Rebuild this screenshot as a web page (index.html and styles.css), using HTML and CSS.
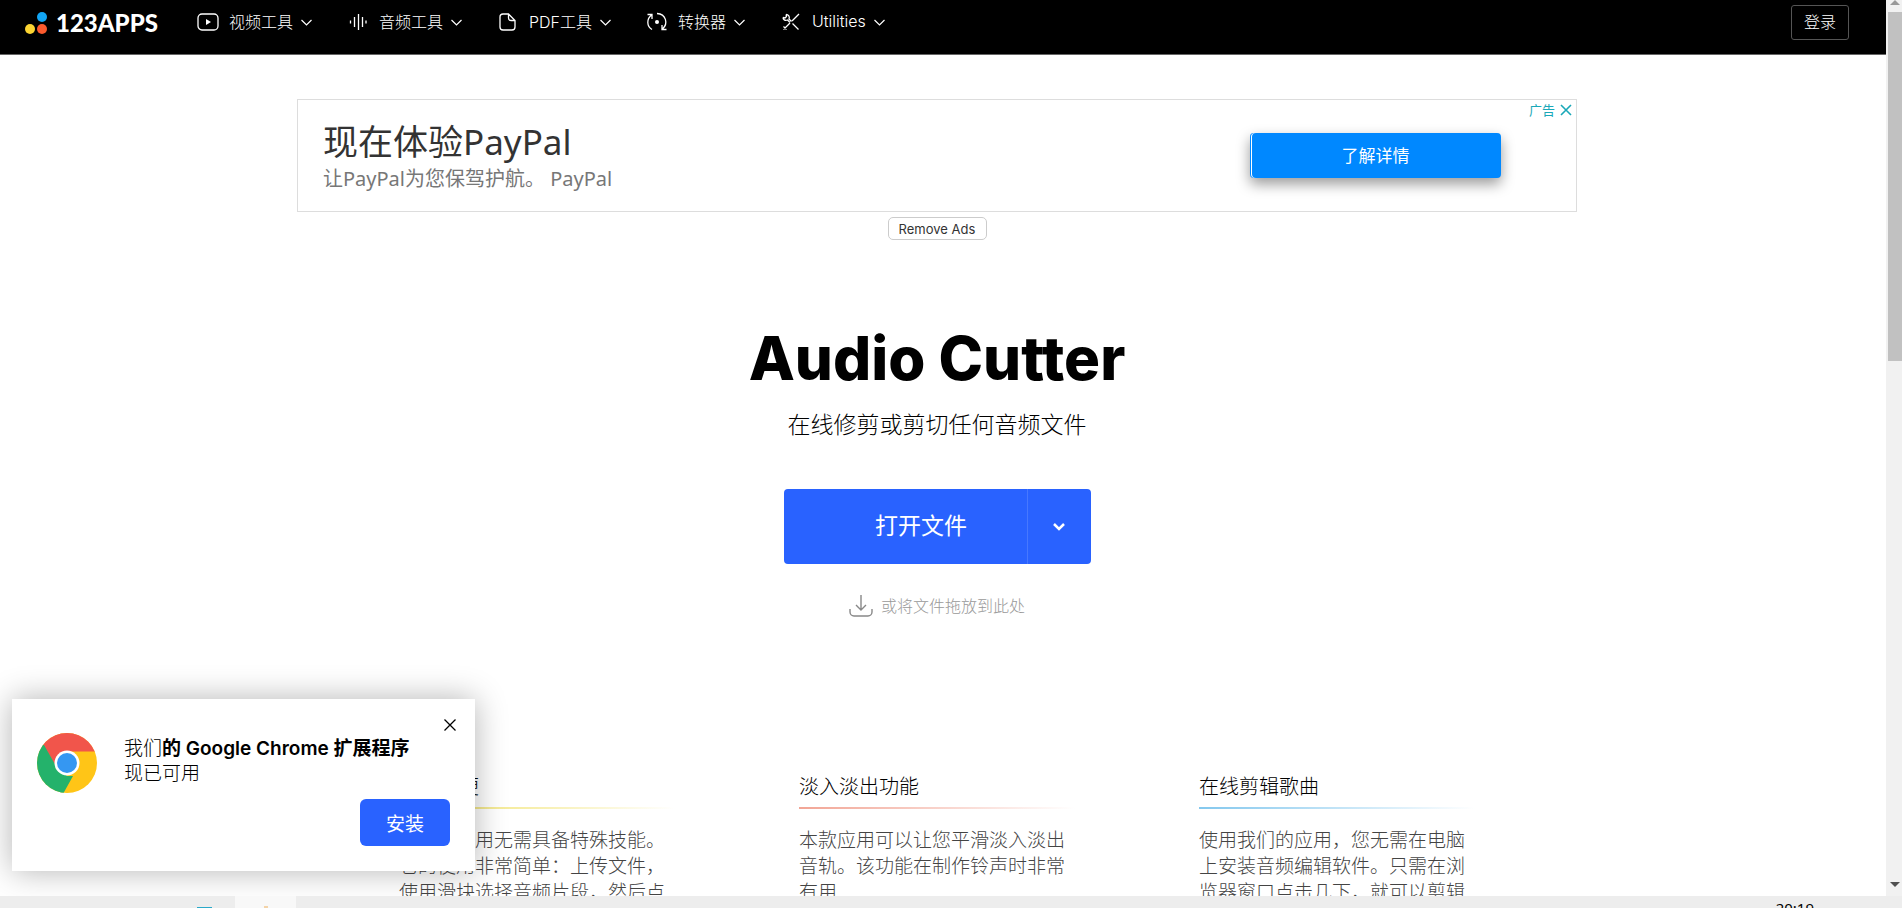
FILE: index.html
```
<!DOCTYPE html>
<html lang="zh-CN">
<head>
    <meta charset="UTF-8">
    <meta name="viewport" content="width=device-width, initial-scale=1.0">
    <title>Audio Cutter</title>
    <link rel="stylesheet" href="styles.css">
</head>
<body>
    <div class="window">
        <div class="page">
            <header class="header">
                <a class="logo" href="#">
                    <svg width="24" height="24" viewBox="0 0 24 24">
                        <circle cx="18" cy="6" r="5" fill="#12a5f4"/>
                        <circle cx="6" cy="18" r="5" fill="#fbd432"/>
                        <circle cx="18" cy="18" r="5" fill="#fb5a2d"/>
                    </svg>
                    <span>123APPS</span>
                </a>
                <nav class="nav">
                    <a href="#">
                        <svg class="icon" viewBox="0 0 22 22"><rect x="1" y="3" width="20" height="16" rx="4"/><path d="M9 8v6l5-3z" fill="#fff" stroke="none"/></svg>
                        <span>视频工具</span>
                        <svg class="chevron" viewBox="0 0 11 7"><path d="M.5 1l5 5 5-5"/></svg>
                    </a>
                    <a href="#">
                        <svg class="icon" viewBox="0 0 22 22"><path d="M3.500 9.500v3M7.500 6v10M11.500 3v16M15.500 6v10M19 9.500v3"/></svg>
                        <span>音频工具</span>
                        <svg class="chevron" viewBox="0 0 11 7"><path d="M.5 1l5 5 5-5"/></svg>
                    </a>
                    <a href="#">
                        <svg class="icon" viewBox="0 0 22 22"><path d="M11.500 3H6a3 3 0 0 0-3 3v10a3 3 0 0 0 3 3h9a3 3 0 0 0 3-3V9.500zM11.500 3v4a2.500 2.500 0 0 0 2.500 2.500h4"/></svg>
                        <span>PDF工具</span>
                        <svg class="chevron" viewBox="0 0 11 7"><path d="M.5 1l5 5 5-5"/></svg>
                    </a>
                    <a href="#">
                        <svg class="icon" viewBox="0 0 22 22"><path d="M6 18.500C.500 15 .500 8 5.500 4M1.500 3.500h4.500V8M11 2.500c9 .500 11.500 10 5.500 15.500M20.500 18.500H16V14"/><circle cx="11" cy="11" r="2" fill="#fff" stroke="none"/></svg>
                        <span>转换器</span>
                        <svg class="chevron" viewBox="0 0 11 7"><path d="M.5 1l5 5 5-5"/></svg>
                    </a>
                    <a href="#">
                        <svg class="icon" viewBox="0 0 22 22"><path d="M19 3L12 10M10 12l-6.500 6.500M12.500 12.500L18.500 18.500M3 6.500c0 2 2 3.500 4.500 2.500l2.500 2.500M6 3.500c2.500 0 4 2 3 4.500l2.500 2.500M3 6.500l2 .5 1.500-1.500L6 3.500M3.500 15.500l3 3"/></svg>
                        <span>Utilities</span>
                        <svg class="chevron" viewBox="0 0 11 7"><path d="M.5 1l5 5 5-5"/></svg>
                    </a>
                </nav>
                <button class="login" type="button">登录</button>
            </header>

            <main class="main">
                <section class="ad">
                    <div class="ad-text">
                        <div class="ad-title">现在体验PayPal</div>
                        <div class="ad-desc">让PayPal为您保驾护航。 PayPal</div>
                    </div>
                    <a class="ad-button" href="#">了解详情</a>
                    <div class="ad-label">
                        <span>广告</span>
                        <svg width="12" height="12" viewBox="0 0 12 12"><path d="M1 1l10 10M11 1L1 11"/></svg>
                    </div>
                </section>
                <button class="remove-ads" type="button">Remove Ads</button>

                <h1>Audio Cutter</h1>
                <p class="subtitle">在线修剪或剪切任何音频文件</p>
                <div class="open">
                    <button class="open-file" type="button">打开文件</button>
                    <button class="open-more" type="button" aria-label="更多">
                        <svg width="14" height="10" viewBox="0 0 14 10"><path d="M2 2l5 5 5-5"/></svg>
                    </button>
                </div>
                <div class="drop">
                    <svg width="24" height="24" viewBox="0 0 24 24"><path d="M12 1v15M7 11l5 5 5-5M1 15v3a4 4 0 0 0 4 4h14a4 4 0 0 0 4-4v-3"/></svg>
                    <span>或将文件拖放到此处</span>
                </div>

                <section class="features">
                    <article class="feature yellow">
                        <h2>操作简便</h2>
                        <p>使用本应用无需具备特殊技能。它的使用非常简单：上传文件，使用滑块选择音频片段，然后点</p>
                    </article>
                    <article class="feature red">
                        <h2>淡入淡出功能</h2>
                        <p>本款应用可以让您平滑淡入淡出音轨。该功能在制作铃声时非常有用</p>
                    </article>
                    <article class="feature blue">
                        <h2>在线剪辑歌曲</h2>
                        <p>使用我们的应用，您无需在电脑上安装音频编辑软件。只需在浏览器窗口点击几下，就可以剪辑</p>
                    </article>
                </section>
            </main>

            <aside class="popup">
                <svg class="chrome" viewBox="0 0 60 60">
                    <defs><clipPath id="disc"><circle cx="30" cy="30" r="30"/></clipPath></defs>
                    <g clip-path="url(#disc)">
                        <rect width="60" height="60" fill="#ffc517"/>
                        <path d="M0 0H60V18.500H30L18 32 5 10z" fill="#f1554b"/>
                        <path d="M7 12L19 33l11 10 6 0L26 61H0V12z" fill="#24b26b"/>
                    </g>
                    <circle cx="30" cy="30" r="12.500" fill="#fff"/>
                    <circle cx="30" cy="30" r="10" fill="#3597f2"/>
                </svg>
                <p>我们<b>的 Google Chrome 扩展程序</b><br>现已可用</p>
                <button class="install" type="button">安装</button>
                <button class="close" type="button" aria-label="关闭">
                    <svg width="12" height="12" viewBox="0 0 12 12"><path d="M.5.5l11 11M11.500.5l-11 11"/></svg>
                </button>
            </aside>
        </div>
        <div class="scrollbar">
            <svg width="10" height="12" viewBox="0 0 10 12"><path d="M0 5l5-5 5 5z" fill="#999"/></svg>
            <div class="thumb"></div>
            <svg class="down" width="10" height="14" viewBox="0 0 10 14"><path d="M0 0h10L5 5z" fill="#505050"/></svg>
        </div>
    </div>
    <footer class="taskbar">
        <div class="task"><i class="teal"></i></div>
        <div class="task active"><i class="orange"></i></div>
        <time>20:19</time>
    </footer>
</body>
</html>
```
FILE: styles.css
```
* { box-sizing: border-box; }
body { margin: 0; height: 100vh; display: flex; flex-direction: column; overflow: hidden; background: #fff; color: #000; font-family: Inter, "Noto Sans CJK SC", sans-serif; font-weight: 300; }
h1, h2, p { margin: 0; }
a { color: inherit; text-decoration: none; }
button { font-family: inherit; font-weight: inherit; padding: 0; border: 0; cursor: pointer; }
svg { display: block; flex: none; fill: none; }

.window { flex: 1; min-height: 0; display: flex; }
.page { flex: 1; position: relative; overflow: hidden; }

/* header */
.header { display: flex; align-items: center; padding: 5px 37px 14px 24px; background: #000; border-bottom: 1px solid #666; color: #fff; font-size: 16px; }
.logo { display: flex; align-items: center; gap: 8px; width: 173px; font-family: Lato, sans-serif; font-size: 24px; font-weight: 900; }
.nav { flex: 1; display: flex; gap: 35px; padding-bottom: 2px; }
.nav a { display: flex; align-items: center; white-space: nowrap; }
.nav span { padding-bottom: 1px; }
.icon { width: 22px; height: 22px; margin-right: 10px; stroke: #fff; stroke-width: 1.3; }
.chevron { width: 11px; height: 7px; margin: 2px 0 0 8px; stroke: #fff; stroke-width: 1.2; }
.login { width: 58px; height: 35px; padding-bottom: 3px; border: 1px solid #555; border-radius: 3px; background: #000; color: #fff; font-size: 16px; }

/* content */
.main { display: flex; flex-direction: column; align-items: center; padding: 44px 12px 0 0; }
.ad { position: relative; display: flex; align-items: center; justify-content: space-between; width: 1280px; max-width: 100%; height: 113px; padding: 0 75px 0 25px; border: 1px solid #ddd; font-family: "Noto Sans", "Noto Sans CJK SC", sans-serif; font-weight: 400; }
.ad-title { font-size: 35px; line-height: 46px; color: #333; }
.ad-desc { font-size: 20px; line-height: 28px; color: #777; }
.ad-button { width: 251px; height: 45px; border-radius: 4px; background: #08f; box-shadow: inset 1px 0 #08f, inset 2px 0 #fff, 0 6px 14px rgba(0, 0, 0, 0.4); color: #fff; font-size: 17px; line-height: 45px; text-align: center; }
.ad-label { position: absolute; top: 0; right: 4px; display: flex; align-items: center; gap: 5px; color: #1aa8b8; font-size: 13px; line-height: 20px; }
.ad-label svg { stroke: #1aa8b8; stroke-width: 1.6; }
.remove-ads { width: 99px; height: 23px; margin-top: 5px; border: 1px solid #ccc; border-radius: 5px; background: #fff; color: #333; font-size: 13px; font-weight: 400; }
h1 { margin-top: 82px; font-size: 60px; line-height: 72px; font-weight: 800; }
.subtitle { margin-top: 15px; font-size: 23px; line-height: 32px; }
.open { display: flex; margin-top: 48px; border-radius: 4px; overflow: hidden; }
.open button { height: 75px; background: #2962ff; color: #fff; }
.open .open-file { width: 243px; padding: 0 0 6px 32px; font-size: 23px; font-weight: 400; }
.open-more { display: flex; align-items: center; justify-content: center; width: 64px; }
.open .open-more { border-left: 1px solid #4778ff; }
.open-more svg { stroke: #fff; stroke-width: 2.5; }
.drop { display: flex; align-items: center; gap: 8px; margin-top: 30px; color: #999; font-size: 16px; line-height: 24px; }
.drop svg { stroke: #888; stroke-width: 1.4; }

.features { display: grid; grid-template-columns: repeat(3, 276px); gap: 124px; margin-top: 154px; }
.feature h2 { padding-bottom: 7px; background: linear-gradient(to right, var(--line), #fff) bottom / 100% 2px no-repeat; font-size: 20px; line-height: 30px; font-weight: 300; }
.feature p { margin-top: 19px; color: #444; font-size: 19px; line-height: 26px; }
.yellow { --line: #f0e060; }
.red { --line: #f2a595; }
.blue { --line: #84c8ee; }

/* extension popup */
.popup { position: absolute; left: 12px; bottom: 25px; display: grid; grid-template-columns: 60px 1fr; column-gap: 27px; width: 463px; padding: 34px 25px 25px; background: #fff; box-shadow: 0 0 30px rgba(0, 0, 0, 0.3); }
.chrome { width: 60px; height: 60px; }
.popup p { padding-top: 3px; font-size: 19px; line-height: 25px; white-space: nowrap; }
.popup b { font-weight: 600; }
.install { grid-column: 2; justify-self: end; width: 90px; height: 47px; margin-top: 6px; border-radius: 6px; background: #2962ff; color: #fff; font-size: 19px; font-weight: 400; }
.close { position: absolute; top: 20px; right: 19px; background: none; }
.close svg { stroke: #000; stroke-width: 1.3; }

/* scrollbar and taskbar */
.scrollbar { display: flex; flex-direction: column; align-items: center; width: 16px; padding-left: 2px; background: #f1f1f1; }
.thumb { width: 100%; height: 39%; background: #c1c1c1; }
.down { margin-top: auto; }
.taskbar { position: relative; display: flex; height: 12px; padding: 0 88px 0 174px; overflow: hidden; background: #ededed; }
.task { display: flex; align-items: flex-end; justify-content: center; width: 61px; }
.active { background: #f8f8f8; }
.teal { width: 15px; height: 1px; background: #2aa9c9; }
.orange { width: 4px; height: 2px; background: #f3d3a8; }
.taskbar time { margin: 4px 0 0 auto; font-family: "Noto Sans", sans-serif; font-size: 15px; font-weight: 400; line-height: 16px; }
```
